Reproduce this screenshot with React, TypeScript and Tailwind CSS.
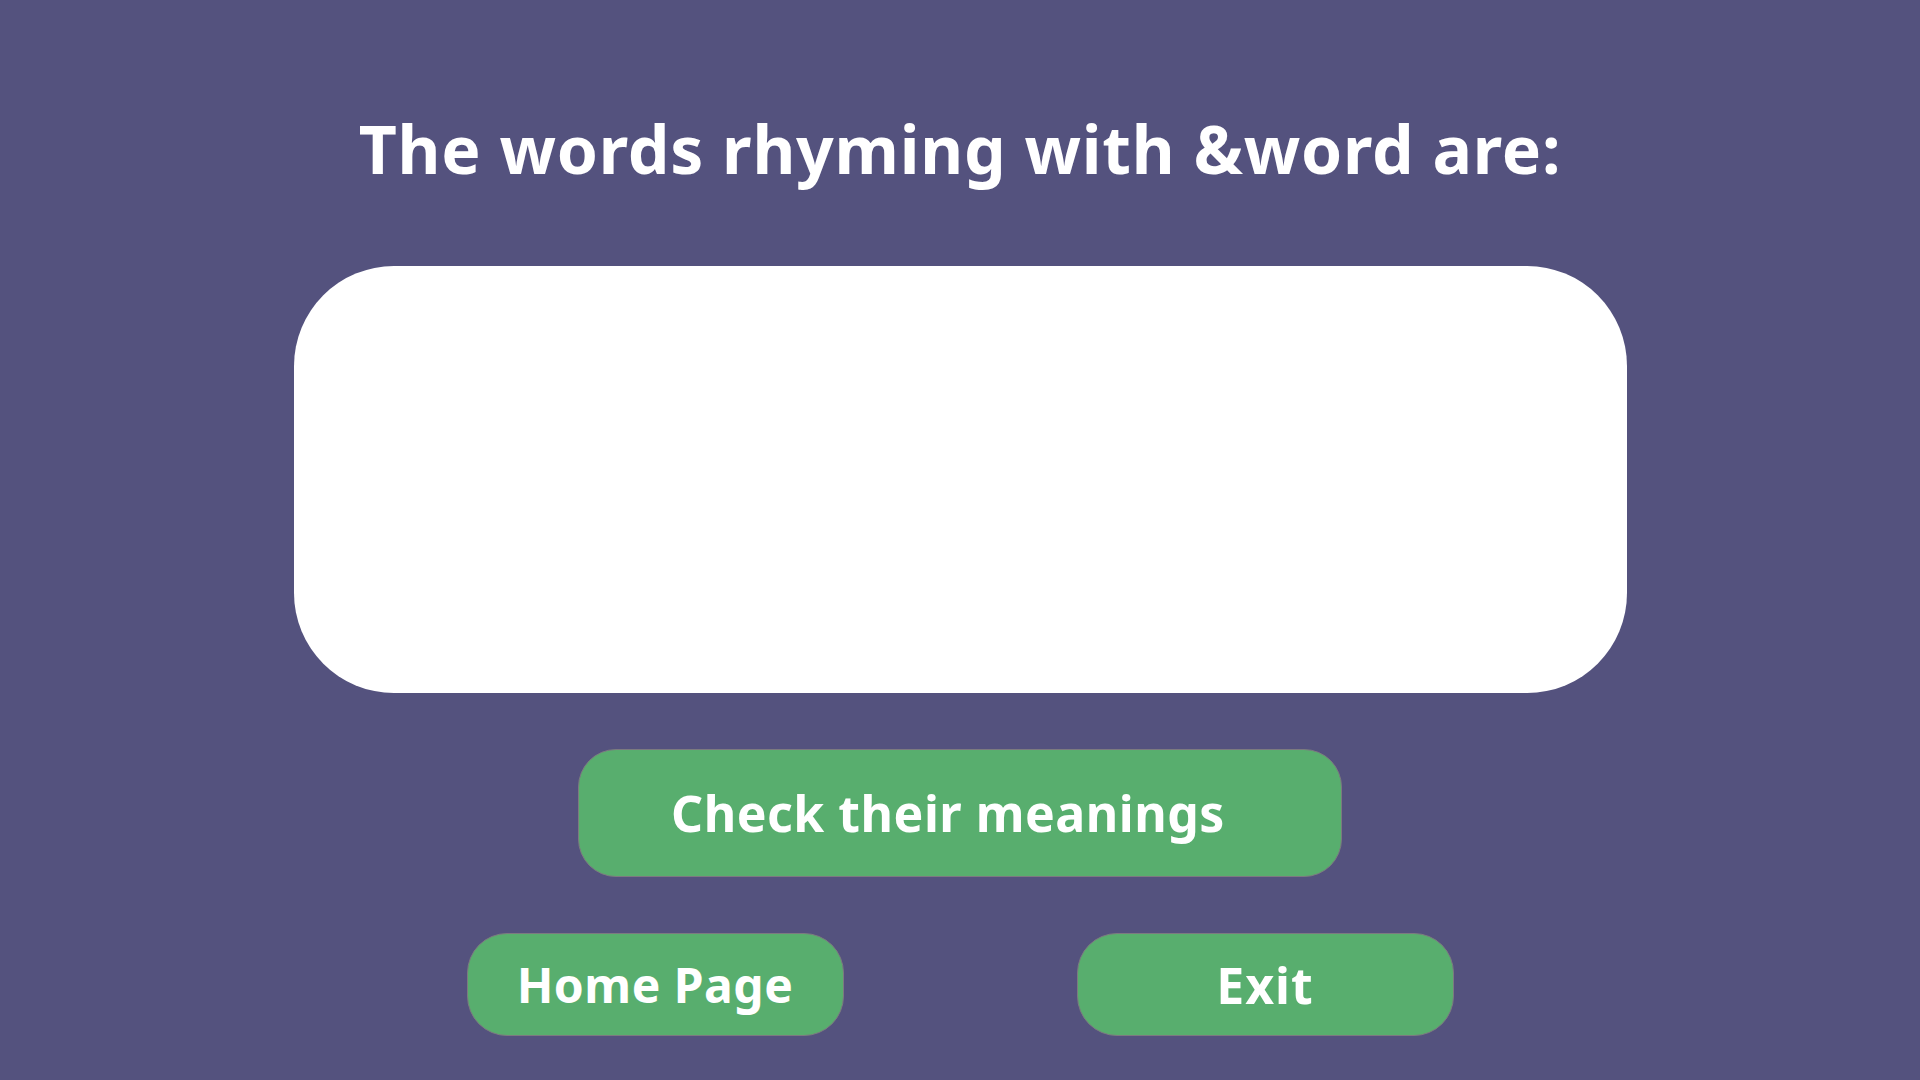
export default function App() {
  const font = { fontFamily: '"Comic Sans MS", "Noto Sans", sans-serif' }

  return (
    <div
      className="min-h-screen w-full bg-[#54527e] flex flex-col items-center text-white"
      style={font}
    >
      <h1 className="pt-[115px] h-[180px] text-[66px] leading-none font-bold tracking-[0.8px]">
        The words rhyming with &amp;word are:
      </h1>

      <div className="mt-[86px] w-[1333px] h-[427px] bg-white rounded-[100px]" />

      <button className="mt-[56px] w-[764px] h-[128px] rounded-[38px] bg-[#58ae6e] border border-[#7c7a80] flex items-center justify-center text-[50px] font-bold leading-none pr-6 tracking-[0.5px]">
        Check their meanings
      </button>

      <div className="mt-[56px] flex gap-[233px]">
        <button className="w-[377px] h-[103px] rounded-[40px] bg-[#58ae6e] border border-[#7c7a80] flex items-center justify-center text-[48px] font-bold leading-none tracking-[0.5px]">
          Home Page
        </button>
        <button className="w-[377px] h-[103px] rounded-[40px] bg-[#58ae6e] border border-[#7c7a80] flex items-center justify-center text-[50px] font-bold leading-none tracking-[1px]">
          Exit
        </button>
      </div>
    </div>
  )
}
